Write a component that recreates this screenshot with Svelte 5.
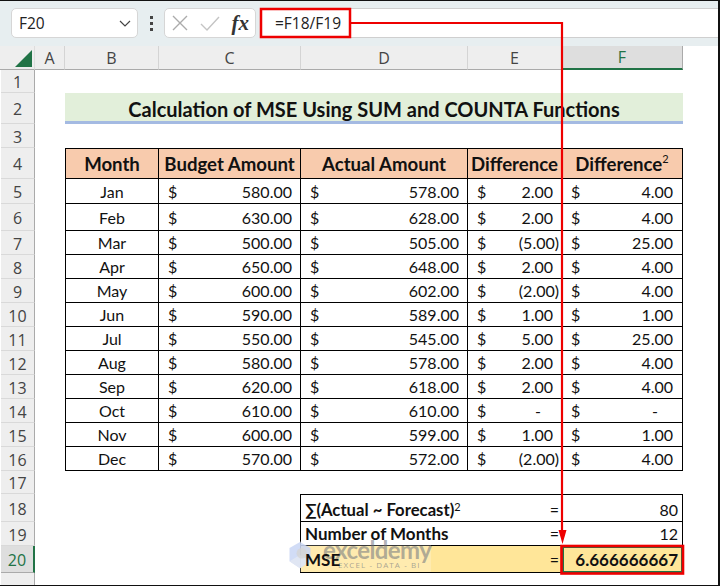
<script>
  const cols = ['A', 'B', 'C', 'D', 'E', 'F'];
  const months = [
    ['Jan', '580.00', '578.00', '2.00', '4.00'],
    ['Feb', '630.00', '628.00', '2.00', '4.00'],
    ['Mar', '500.00', '505.00', '(5.00)', '25.00'],
    ['Apr', '650.00', '648.00', '2.00', '4.00'],
    ['May', '600.00', '602.00', '(2.00)', '4.00'],
    ['Jun', '590.00', '589.00', '1.00', '1.00'],
    ['Jul', '550.00', '545.00', '5.00', '25.00'],
    ['Aug', '580.00', '578.00', '2.00', '4.00'],
    ['Sep', '620.00', '618.00', '2.00', '4.00'],
    ['Oct', '610.00', '610.00', '-', '-'],
    ['Nov', '600.00', '599.00', '1.00', '1.00'],
    ['Dec', '570.00', '572.00', '(2.00)', '4.00']
  ];
</script>

<div class="frame">
  <header class="bar">
    <div class="namebox">
      <span>F20</span>
      <svg width="12" height="7" viewBox="0 0 12 7"><path d="M1 1l5 5 5-5" fill="none" stroke="#444" stroke-width="1.2" /></svg>
    </div>
    <div class="dots"><i></i><i></i><i></i></div>
    <div class="fxbox">
      <svg width="16" height="16" viewBox="0 0 16 16"><path d="M1 1l14 14M15 1L1 15" stroke="#ababab" stroke-width="1.4" fill="none" /></svg>
      <svg width="20" height="15" viewBox="0 0 20 15"><path d="M1 8l6 6L19 1" stroke="#c4c4c4" stroke-width="1.4" fill="none" /></svg>
      <span class="fx">fx</span>
    </div>
    <div class="formula">=F18/F19</div>
  </header>

  <main class="sheet">
    <div class="corner"><svg width="17" height="17" viewBox="0 0 17 17"><path d="M17 0v17H0z" fill="#217346" /></svg></div>
    {#each cols as c}
      <div class="colhead" class:sel={c === 'F'}>{c}</div>
    {/each}
    <div class="blank"></div>

    <div class="rowhead">1</div><div class="blank wide7"></div>

    <div class="rowhead">2</div><div class="blank"></div>
    <div class="title">Calculation of MSE Using SUM and COUNTA Functions</div><div class="blank"></div>

    <div class="rowhead">3</div><div class="blank wide7"></div>

    <div class="rowhead">4</div><div class="blank"></div>
    <div class="th first">Month</div>
    <div class="th">Budget Amount</div>
    <div class="th">Actual Amount</div>
    <div class="th">Difference</div>
    <div class="th">Difference<sup>2</sup></div>
    <div class="blank"></div>

    {#each months as m, i}
      <div class="rowhead">{i + 5}</div><div class="blank"></div>
      <div class="td first center">{m[0]}</div>
      <div class="td money"><span>$</span><span class="num">{m[1]}</span></div>
      <div class="td money"><span>$</span><span class="num">{m[2]}</span></div>
      <div class="td money diff"><span>$</span><span class="num" class:paren={m[3][0] === '('} class:dash={m[3] === '-'}>{m[3]}</span></div>
      <div class="td money sq"><span>$</span><span class="num" class:dash={m[4] === '-'}>{m[4]}</span></div>
      <div class="blank"></div>
    {/each}

    <div class="rowhead">17</div><div class="blank wide7"></div>

    <div class="rowhead">18</div><div class="blank wide3"></div>
    <div class="sum label top">∑(Actual ~ Forecast)<sup>2</sup></div>
    <div class="sum eq top">=</div>
    <div class="sum val top">80</div>
    <div class="blank"></div>

    <div class="rowhead">19</div><div class="blank wide3"></div>
    <div class="sum label">Number of Months</div>
    <div class="sum eq">=</div>
    <div class="sum val">12</div>
    <div class="blank"></div>

    <div class="rowhead sel">20</div><div class="blank wide3"></div>
    <div class="sum label fill"><span class="over">MSE</span></div>
    <div class="sum eq fill">=</div>
    <div class="sum val fill result">6.666666667</div>
    <div class="blank"></div>

    <div class="rowhead last"></div><div class="blank wide7"></div>
  </main>

  <div class="mark">
    <svg class="hex" width="24" height="28" viewBox="0 0 26 32">
      <path d="M13 1l12 7v15l-12 8L1 23V8z" fill="#c9d6f5" opacity="0.85" />
      <path d="M1 23l12-7 12 7-12 8z" fill="#e3e8f2" opacity="0.8" />
      <circle cx="15" cy="14" r="6" fill="#d4d4d4" opacity="0.8" />
    </svg>
    <div class="word">exceldemy</div>
    <div class="tag">EXCEL - DATA - BI</div>
  </div>

  <svg class="ink" width="720" height="586" viewBox="0 0 720 586">
    <rect x="261" y="9" width="89" height="28" fill="none" stroke="#ee0000" stroke-width="2.5" />
    <path d="M351 23H562V534" fill="none" stroke="#ee0000" stroke-width="2.2" />
    <path d="M558.5 530H566.5L562.5 544z" fill="#ee0000" />
    <rect x="561.5" y="546" width="121.5" height="27.5" fill="none" stroke="#ee0000" stroke-width="2.6" />
  </svg>
</div>

<style>
  :global(body) { margin: 0; }

  .frame {
    position: relative;
    width: 720px;
    height: 586px;
    box-sizing: border-box;
    border-top: 1px solid #111;
    border-right: 2px solid #111;
    border-bottom: 1px solid #111;
    background: #fff;
    overflow: hidden;
    font-family: "Lato", "Liberation Sans", sans-serif;
    color: #111;
  }

  .bar {
    height: 45px;
    box-sizing: border-box;
    padding: 7px 0 8px 11px;
    display: flex;
    align-items: stretch;
    background: #e7eef0;
    font-family: "Open Sans", "Liberation Sans", sans-serif;
    font-size: 15.5px;
    color: #222;
  }

  .namebox {
    width: 127px;
    box-sizing: border-box;
    padding: 0 6px 0 7px;
    display: flex;
    align-items: center;
    justify-content: space-between;
    background: #fff;
    border: 1px solid #d6d6d6;
    border-radius: 5px;
  }

  .dots {
    width: 26px;
    display: flex;
    flex-direction: column;
    align-items: center;
    justify-content: center;
    gap: 3px;
  }
  .dots i { width: 3px; height: 3px; background: #444; }

  .fxbox {
    width: 92px;
    box-sizing: border-box;
    padding: 0 6px 0 7px;
    display: flex;
    align-items: center;
    justify-content: space-between;
    background: #fff;
    border: 1px solid #d6d6d6;
    border-radius: 5px;
  }
  .fx {
    font-family: "Liberation Serif", serif;
    font-style: italic;
    font-weight: 700;
    font-size: 21px;
    color: #333;
  }

  .formula {
    flex: 1;
    margin-left: 5px;
    padding-left: 14px;
    display: flex;
    align-items: center;
    background: #fff;
    border-top: 1px solid #cfcfcf;
    border-bottom: 1px solid #cfcfcf;
  }

  .sheet {
    display: grid;
    grid-template-columns: 35px 30px 94px 142px 167px 94px 121px 35px;
    grid-template-rows: 24px 23px 31px 24px 31px 25px 27px repeat(10, 24px) 23px 28px 24px 27px 12px;
    background: #fff;
    font-size: 16px;
  }

  .corner {
    background: #eee;
    border-right: 1px solid #ddd;
    border-bottom: 1px solid #aaa;
    padding: 4px 3px 3px 15px;
    box-sizing: border-box;
  }
  .corner svg { display: block; }

  .colhead, .rowhead {
    display: flex;
    align-items: center;
    justify-content: center;
    background: #eee;
    font-family: "Open Sans", "Liberation Sans", sans-serif;
    font-size: 16px;
    color: #444;
    box-sizing: border-box;
  }
  .colhead {
    border-right: 1px solid #d4d4d4;
    border-bottom: 1px solid #aaa;
  }
  .colhead.sel {
    background: #dedede;
    color: #217346;
    border-right: 1px solid #aaa;
    border-bottom: 2px solid #217346;
  }
  .rowhead {
    margin-left: 1px;
    padding-top: 2px;
    border-right: 1px solid #aaa;
    border-bottom: 1px solid #d9d9d9;
  }
  .rowhead.sel {
    background: #dedede;
    color: #217346;
    border-right: 2px solid #217346;
    border-bottom: 1px solid #aaa;
  }
  .rowhead.last { border-bottom: 0; }

  .wide7 { grid-column: span 7; }
  .wide3 { grid-column: span 3; }

  .title {
    grid-column: span 5;
    height: 31px;
    box-sizing: border-box;
    display: flex;
    align-items: center;
    justify-content: center;
    padding-top: 3px;
    background: #e2efda;
    border-bottom: 3px solid #a4bae2;
    font-size: 20px;
    font-weight: 700;
  }

  .th, .td, .sum {
    box-sizing: border-box;
    display: flex;
    align-items: center;
    border-right: 1px solid #000;
    border-bottom: 1px solid #000;
  }
  .first { border-left: 1px solid #000; }

  .th {
    justify-content: center;
    padding-top: 1px;
    background: #f8cbad;
    border-top: 1px solid #000;
    font-weight: 700;
    font-size: 18.6px;
    white-space: nowrap;
  }
  sup {
    font-size: 11px;
    font-weight: 400;
    line-height: 0;
    align-self: flex-start;
    margin-top: 9px;
  }

  .center { justify-content: center; }
  .money { justify-content: space-between; padding: 0 8px 0 9px; }
  .diff { padding-right: 2px; }
  .diff .num { padding-right: 6px; }
  .diff .num.paren { padding-right: 0; }
  .diff .num.dash { padding-right: 18px; }
  .sq { padding-right: 9px; }
  .sq .num.dash { padding-right: 15px; }

  .sum { border-right: 0; }
  .top { border-top: 1px solid #000; padding-top: 3px; }
  .label {
    margin-left: -1px;
    padding-left: 4px;
    border-left: 1px solid #000;
    font-weight: 700;
    font-size: 17px;
    white-space: nowrap;
  }
  .label.top { font-size: 16.7px; }
  .over { position: relative; z-index: 1; }
  .eq { justify-content: flex-end; padding-right: 3px; }
  .val { justify-content: flex-end; padding-right: 4px; border-right: 1px solid #000; }
  .fill { background: #ffe699; }
  .result {
    font-weight: 700;
    font-size: 17px;
    outline: 2px solid #217346;
    outline-offset: -2px;
  }

  .mark {
    position: absolute;
    left: 288px;
    top: 540px;
    width: 143px;
    height: 31px;
    background: rgba(255, 255, 255, 0.22);
    pointer-events: none;
  }
  .hex { position: absolute; left: 0; top: 0; }
  .word {
    position: absolute;
    left: 35px;
    top: -6px;
    font-family: "Lato", "Liberation Sans", sans-serif;
    font-weight: 700;
    font-size: 24px;
    line-height: 30px;
    letter-spacing: -0.6px;
    color: rgba(110, 115, 125, 0.55);
  }
  .tag {
    position: absolute;
    left: 50px;
    top: 19px;
    font-family: "Open Sans", "Liberation Sans", sans-serif;
    font-size: 8px;
    line-height: 10px;
    letter-spacing: 1.1px;
    white-space: nowrap;
    color: rgba(110, 115, 125, 0.6);
  }

  .ink { position: absolute; left: 0; top: -1px; pointer-events: none; }
</style>
